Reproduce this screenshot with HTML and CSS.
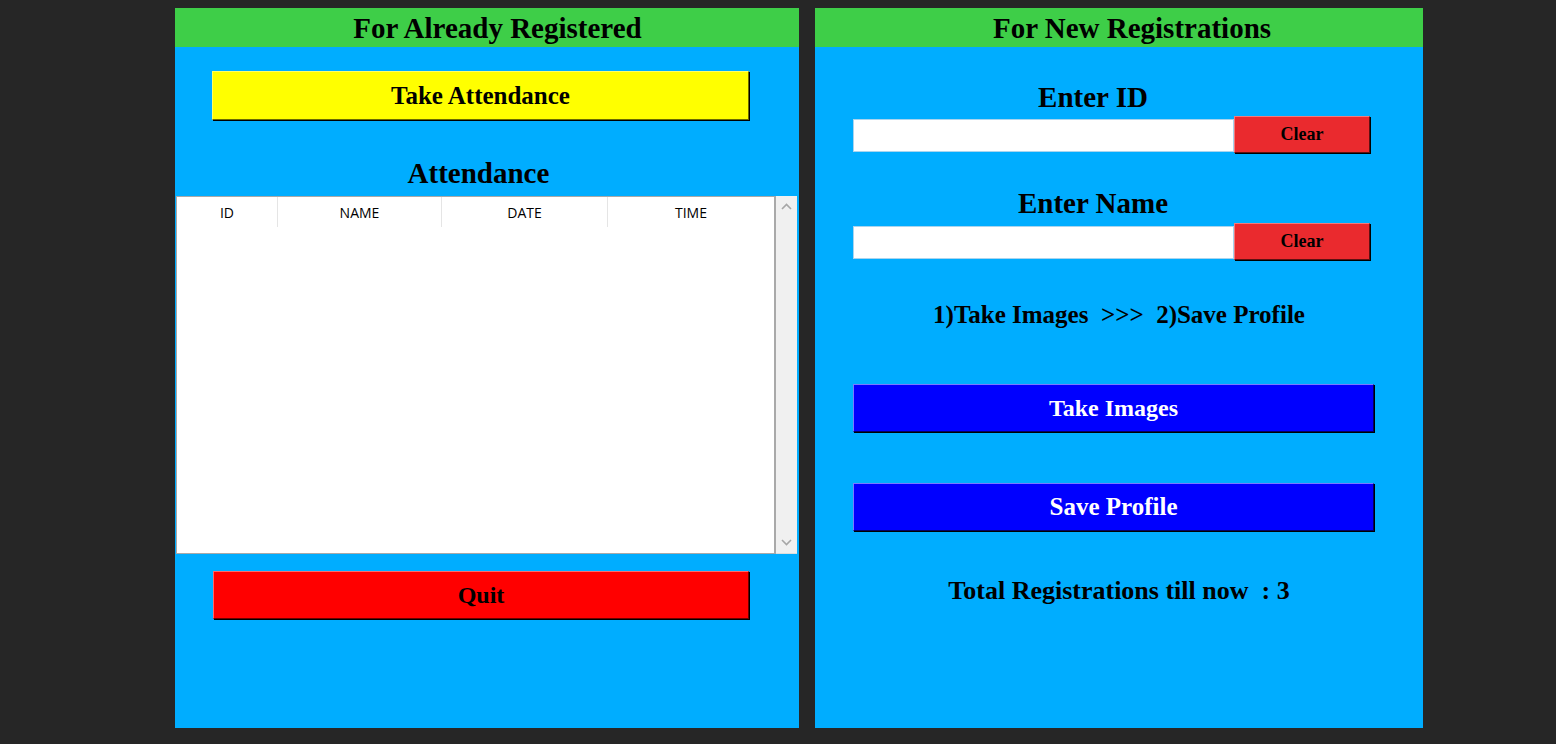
FILE: index.html
```html
<!DOCTYPE html>
<html>
<head>
<meta charset="utf-8">
<link rel="stylesheet" href="styles.css">
</head>
<body>
<div class="page">
  <section class="panel panel-left">
    <div class="hdr hdr-left">For Already Registered</div>
    <div class="btn btn-yellow btn-take">Take Attendance</div>
    <div class="lbl-att">Attendance</div>
    <div class="tree-wrap">
      <div class="tree">
        <div class="tree-head">
          <div class="col col-id">ID</div>
          <div class="col col-name">NAME</div>
          <div class="col col-date">DATE</div>
          <div class="col col-time">TIME</div>
        </div>
      </div>
      <div class="scrollbar">
        <svg class="arrow" width="21" height="20" viewBox="0 0 21 20"><path d="M6 13 L10.5 8.5 L15 13" fill="none" stroke="#a6a6a6" stroke-width="1.6"/></svg>
        <svg class="arrow" width="21" height="20" viewBox="0 0 21 20"><path d="M6 7 L10.5 11.5 L15 7" fill="none" stroke="#a6a6a6" stroke-width="1.6"/></svg>
      </div>
    </div>
    <div class="btn btn-red btn-quit">Quit</div>
  </section>

  <section class="panel panel-right">
    <div class="hdr hdr-right">For New Registrations</div>
    <div class="lbl-field lbl-id">Enter ID</div>
    <div class="entry-row">
      <div class="entry"></div>
      <div class="btn btn-clear">Clear</div>
    </div>
    <div class="lbl-field lbl-name">Enter Name</div>
    <div class="entry-row entry-row-2">
      <div class="entry"></div>
      <div class="btn btn-clear">Clear</div>
    </div>
    <div class="steps">1)Take Images&nbsp;&nbsp;&gt;&gt;&gt;&nbsp;&nbsp;2)Save Profile</div>
    <div class="btn btn-blue btn-images">Take Images</div>
    <div class="btn btn-blue btn-save">Save Profile</div>
    <div class="total">Total Registrations till now&nbsp;&nbsp;: 3</div>
  </section>
</div>
</body>
</html>
```

FILE: styles.css
```css
* { box-sizing: border-box; }

html, body {
  margin: 0;
  padding: 0;
  background: #262626;
}

body {
  width: 1556px;
  height: 744px;
  overflow: hidden;
  font-family: "Liberation Serif", "Times New Roman", serif;
  font-weight: bold;
  color: #000;
}

.page {
  display: flex;
  gap: 16px;
  padding: 8px 0 0 175px;
}

.panel {
  background: #00adff;
  height: 720px;
  display: flex;
  flex-direction: column;
}

.panel-left { width: 624px; }
.panel-right { width: 608px; }

.hdr {
  height: 39px;
  background: #3ece48;
  font-size: 29px;
  line-height: 40px;
  text-align: center;
}
.hdr-left { padding-left: 21px; }
.hdr-right { padding-left: 26px; }

.btn {
  display: flex;
  align-items: center;
  justify-content: center;
  border-style: solid;
  border-width: 1px;
  box-shadow: 1px 1px 0 #000;
}

.btn-yellow {
  background: #ffff00;
  border-color: #ffff66 #6b6b00 #6b6b00 #ffff66;
}
.btn-red {
  background: #ff0000;
  border-color: #ff6a6a #6b0000 #6b0000 #ff6a6a;
}
.btn-blue {
  background: #0000ff;
  border-color: #7a7aff #000066 #000066 #7a7aff;
  color: #fff;
}
.btn-clear {
  background: #ea2a2e;
  border-color: #f47a7c #5e1012 #5e1012 #f47a7c;
  width: 136px;
  height: 37px;
  font-size: 18px;
}

.btn-take {
  margin: 24px 0 0 37px;
  width: 537px;
  height: 49px;
  font-size: 25px;
}

.lbl-att {
  margin-top: 31px;
  height: 45px;
  line-height: 44px;
  font-size: 29px;
  text-align: center;
  padding-right: 17px;
}

.tree-wrap {
  display: flex;
  margin-left: 1px;
  height: 358px;
}

.tree {
  width: 600px;
  height: 358px;
  background: #fff;
  border: 1px solid #a9a9a9;
  border-right: 2px solid #a9a9a9;
}

.tree-head {
  display: flex;
  height: 30px;
  font-family: "Open Sans", "Noto Sans", sans-serif;
  font-weight: normal;
  font-size: 14px;
  letter-spacing: 0;
  color: #000;
}

.col {
  display: flex;
  align-items: center;
  justify-content: center;
  border-right: 1px solid #e5e5e5;
  height: 30px;
}
.col-id { width: 101px; }
.col-name { width: 164px; }
.col-date { width: 166px; }
.col-time { width: 166px; border-right: none; }

.scrollbar {
  width: 21px;
  height: 358px;
  background: #f0f0f0;
  border-bottom: 1px solid #dcdcdc;
  display: flex;
  flex-direction: column;
  justify-content: space-between;
}
.arrow { display: block; }

.btn-quit {
  margin: 17px 0 0 38px;
  width: 536px;
  height: 48px;
  font-size: 24px;
}

.lbl-field {
  width: 556px;
  text-align: center;
  font-size: 29px;
  line-height: 38px;
  height: 38px;
}
.lbl-id { margin-top: 31px; }
.lbl-name { margin-top: 31px; }

.entry-row {
  display: flex;
  align-items: flex-start;
  margin-left: 38px;
  height: 37px;
}
.entry-row-2 { margin-top: 1px; }

.entry {
  width: 381px;
  height: 33px;
  margin-top: 3px;
  background: #fff;
  border: 1px solid #a9d4ee;
}

.steps {
  margin-top: 35px;
  line-height: 40px;
  height: 40px;
  font-size: 25px;
  text-align: center;
}

.btn-images {
  margin: 49px 0 0 38px;
  width: 521px;
  height: 48px;
  font-size: 24px;
}

.btn-save {
  margin: 51px 0 0 38px;
  width: 521px;
  height: 48px;
  font-size: 25px;
}

.total {
  margin-top: 40px;
  line-height: 40px;
  height: 40px;
  font-size: 26px;
  text-align: center;
}
```
